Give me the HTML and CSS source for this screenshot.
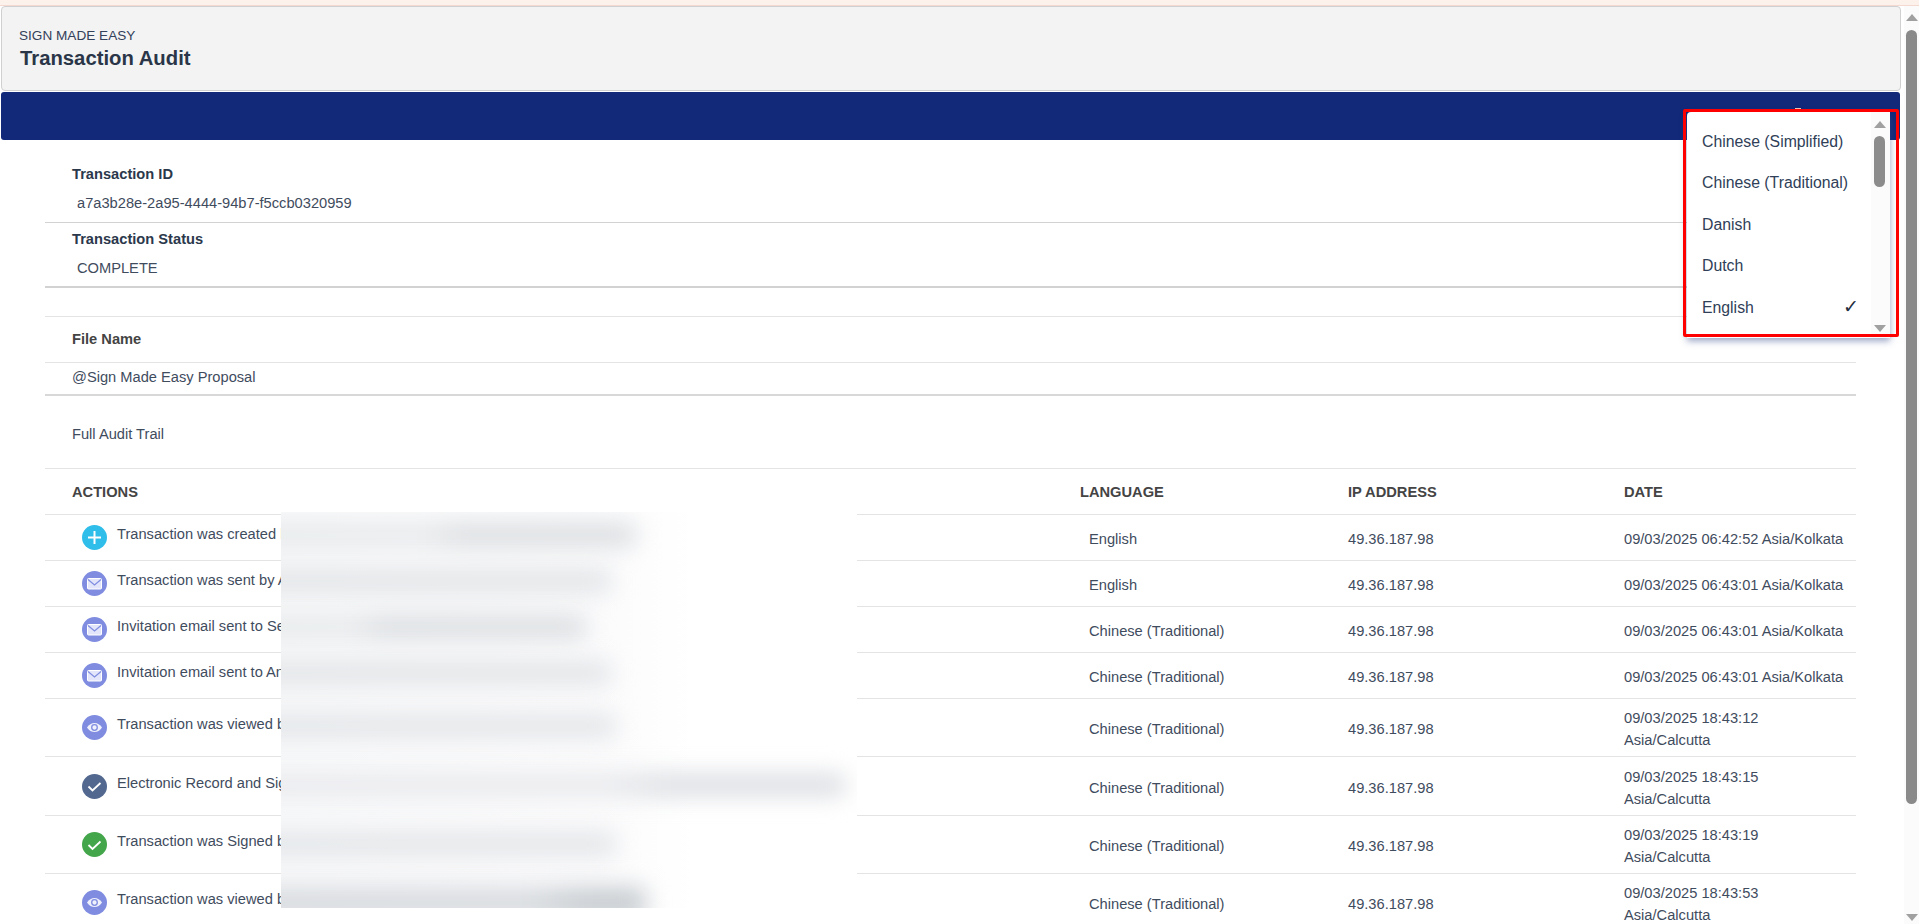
FILE: index.html
```html
<!DOCTYPE html>
<html lang="en">
<head>
<meta charset="utf-8">
<title>Transaction Audit</title>
<link rel="stylesheet" href="styles.css">
</head>
<body>
<svg class="defs" width="0" height="0" aria-hidden="true">
  <symbol id="i-plus" viewBox="0 0 25 25"><circle cx="12.5" cy="12.5" r="12.5" fill="#2fbdea"/><path d="M12.5 6v13M6 12.5h13" stroke="#fff" stroke-width="2" fill="none"/></symbol>
  <symbol id="i-mail" viewBox="0 0 25 25"><circle cx="12.5" cy="12.5" r="12.5" fill="#7f8ce0"/><rect x="5.5" y="7.5" width="14" height="10.5" rx="1" fill="#e3e6fa" stroke="#fff" stroke-width="1"/><path d="M6 8.5l6.5 5.5L19 8.5" stroke="#7f8ce0" stroke-width="1.2" fill="none"/></symbol>
  <symbol id="i-eye" viewBox="0 0 25 25"><circle cx="12.5" cy="12.5" r="12.5" fill="#7f8ce0"/><path d="M5 12.5C7 9.5 9.5 8 12.5 8s5.5 1.500 7.500 4.500C18 15.500 15.500 17 12.500 17S7 15.500 5 12.500z" fill="#eef0fc"/><circle cx="12.500" cy="12.500" r="2.800" fill="#eef0fc" stroke="#7f8ce0" stroke-width="1.300"/></symbol>
  <symbol id="i-record" viewBox="0 0 25 25"><circle cx="12.5" cy="12.5" r="12.5" fill="#52688f"/><path d="M6.500 12.500l4 4 8-7.500" stroke="#fff" stroke-width="1.800" fill="none"/></symbol>
  <symbol id="i-signed" viewBox="0 0 25 25"><circle cx="12.5" cy="12.5" r="12.5" fill="#43a64a"/><path d="M6.500 13l4 4 8-7.500" stroke="#fff" stroke-width="1.800" fill="none"/></symbol>
</svg>
<div class="strip"></div>
<div class="shell">
  <main class="page">
    <header class="head">
      <div class="eyebrow">SIGN MADE EASY</div>
      <h1 class="title">Transaction Audit</h1>
    </header>
    <div class="bluebar"></div>
    <section class="details">
      <div class="block block-id">
        <div class="label">Transaction ID</div>
        <div class="value">a7a3b28e-2a95-4444-94b7-f5ccb0320959</div>
      </div>
      <div class="block block-status">
        <div class="label">Transaction Status</div>
        <div class="value">COMPLETE</div>
      </div>
      <div class="spacer"></div>
      <div class="file-head">File Name</div>
      <div class="file-value">@Sign Made Easy Proposal</div>
      <div class="trail">Full Audit Trail</div>
      <div class="audit">
        <div class="row row-head">
          <div class="th th-actions">ACTIONS</div>
          <div class="th">LANGUAGE</div>
          <div class="th">IP ADDRESS</div>
          <div class="th">DATE</div>
        </div>
        <div class="row"><div class="action"><svg class="icon"><use href="#i-plus"/></svg><span class="action-text">Transaction was created by</span></div><div class="lang">English</div><div class="ip">49.36.187.98</div><div class="date">09/03/2025 06:42:52 Asia/Kolkata</div></div>
        <div class="row"><div class="action"><svg class="icon"><use href="#i-mail"/></svg><span class="action-text">Transaction was sent by A</span></div><div class="lang">English</div><div class="ip">49.36.187.98</div><div class="date">09/03/2025 06:43:01 Asia/Kolkata</div></div>
        <div class="row"><div class="action"><svg class="icon"><use href="#i-mail"/></svg><span class="action-text">Invitation email sent to Se</span></div><div class="lang">Chinese (Traditional)</div><div class="ip">49.36.187.98</div><div class="date">09/03/2025 06:43:01 Asia/Kolkata</div></div>
        <div class="row"><div class="action"><svg class="icon"><use href="#i-mail"/></svg><span class="action-text">Invitation email sent to An</span></div><div class="lang">Chinese (Traditional)</div><div class="ip">49.36.187.98</div><div class="date">09/03/2025 06:43:01 Asia/Kolkata</div></div>
        <div class="row row-tall"><div class="action"><svg class="icon"><use href="#i-eye"/></svg><span class="action-text">Transaction was viewed by</span></div><div class="lang">Chinese (Traditional)</div><div class="ip">49.36.187.98</div><div class="date">09/03/2025 18:43:12 Asia/Calcutta</div></div>
        <div class="row row-tall"><div class="action"><svg class="icon"><use href="#i-record"/></svg><span class="action-text">Electronic Record and Signature</span></div><div class="lang">Chinese (Traditional)</div><div class="ip">49.36.187.98</div><div class="date">09/03/2025 18:43:15 Asia/Calcutta</div></div>
        <div class="row row-tall"><div class="action"><svg class="icon"><use href="#i-signed"/></svg><span class="action-text">Transaction was Signed by</span></div><div class="lang">Chinese (Traditional)</div><div class="ip">49.36.187.98</div><div class="date">09/03/2025 18:43:19 Asia/Calcutta</div></div>
        <div class="row row-tall"><div class="action"><svg class="icon"><use href="#i-eye"/></svg><span class="action-text">Transaction was viewed by</span></div><div class="lang">Chinese (Traditional)</div><div class="ip">49.36.187.98</div><div class="date">09/03/2025 18:43:53 Asia/Calcutta</div></div>
      </div>
    </section>
    <div class="redaction" aria-hidden="true">
      <div class="slot slot-a"><div class="smear smear-1"></div></div>
      <div class="slot slot-a"><div class="smear smear-2"></div></div>
      <div class="slot slot-a"><div class="smear smear-3"></div></div>
      <div class="slot slot-a"><div class="smear smear-2"></div></div>
      <div class="slot slot-b"><div class="smear smear-5"></div></div>
      <div class="slot slot-b"><div class="smear smear-6"></div></div>
      <div class="slot slot-b"><div class="smear smear-5"></div></div>
      <div class="slot slot-b"><div class="smear smear-8"></div></div>
    </div>
    <div class="peek"></div>
    <div class="menu">
      <ul class="menu-list">
        <li class="menu-item">Chinese (Simplified)</li>
        <li class="menu-item">Chinese (Traditional)</li>
        <li class="menu-item">Danish</li>
        <li class="menu-item">Dutch</li>
        <li class="menu-item">English<span class="tick">✓</span></li>
      </ul>
      <div class="menu-scroll">
        <span class="arrow arrow-up"></span>
        <span class="menu-thumb"></span>
        <span class="arrow arrow-down"></span>
      </div>
    </div>
    <div class="annotation"></div>
  </main>
  <div class="scrollbar">
    <span class="arrow arrow-up"></span>
    <span class="thumb"></span>
    <span class="arrow arrow-down"></span>
  </div>
</div>
</body>
</html>
```
FILE: styles.css
```css
* { box-sizing: border-box; }
html, body { margin: 0; height: 100%; overflow: hidden; }
body {
  font-family: "Liberation Sans", Arial, sans-serif;
  font-size: 14.667px;
  color: #3f4c5e;
  background: #fff;
}
.defs { position: absolute; }
.strip { height: 6px; background: #fdf1ec; border-bottom: 1px solid #f3d9cf; }
.shell { display: flex; height: 918px; }
.page { position: relative; flex: 1; min-width: 0; overflow: hidden; }

.head {
  height: 85px;
  margin: 0 3px 0 1px;
  padding: 20px 0 0 17px;
  background: #f3f3f3;
  border: 1px solid #d0d0d0;
  border-radius: 4px;
}
.eyebrow { font-size: 13.6px; line-height: 17px; color: #33415a; }
.title { margin: 2px 0 0 1px; font-size: 20.3px; line-height: 24px; font-weight: 700; color: #2a3648; }
.bluebar { height: 48px; margin: 1px 4px 0 1px; background: #122878; border-radius: 3px; }

.details { padding: 0 48px 0 45px; }
.label { padding-left: 27px; font-weight: 700; line-height: 20px; color: #2b384c; }
.value { padding: 9px 0 0 32px; line-height: 20px; }
.block-id { height: 83px; padding-top: 24px; border-bottom: 1px solid #d2d2d2; }
.block-status { height: 65px; padding-top: 6px; border-bottom: 2px solid #d2d2d2; }
.spacer { height: 29px; border-bottom: 1px solid #e4e4e4; }
.file-head { height: 46px; padding: 12px 0 0 27px; line-height: 20px; font-weight: 700; color: #444; border-bottom: 1px solid #e4e4e4; }
.file-value { height: 33px; padding: 4px 0 0 27px; line-height: 20px; border-bottom: 2px solid #d8d8d8; }
.trail { height: 73px; padding: 28px 0 0 27px; line-height: 20px; border-bottom: 1px solid #e4e4e4; }

.row {
  display: grid;
  grid-template-columns: 1026px 268px 276px 1fr;
  align-items: center;
  height: 46px;
  border-bottom: 1px solid #e4e4e4;
}
.row-tall { height: 58.4px; }
.th { padding-left: 9px; font-weight: 700; color: #444; }
.th-actions { padding-left: 27px; }
.action { display: flex; align-items: center; gap: 10px; padding-left: 37px; }
.icon { width: 25px; height: 25px; flex: none; }
.action-text { padding-bottom: 7px; white-space: nowrap; }
.lang { padding: 3px 0 0 18px; }
.ip { padding: 3px 0 0 9px; }
.date { padding: 3px 10px 0 9px; line-height: 22px; }

.redaction {
  position: absolute;
  left: 281px;
  top: 506px;
  width: 576px;
  height: 396px;
  overflow: hidden;
  background: linear-gradient(90deg, #f8f9fa 0, #fbfbfc 55%, #fff 72%);
}
.slot { display: flex; align-items: center; }
.slot-a { height: 46px; }
.slot-b { height: 59px; }
.smear { height: 24px; margin-left: -30px; filter: blur(11px); border-radius: 8px; }
.smear-1 { width: 385px; background: linear-gradient(90deg, #e8eaec 0 45%, #dcdfe2 55% 100%); }
.smear-2 { width: 360px; background: #e3e5e8; }
.smear-3 { width: 335px; background: linear-gradient(90deg, #e8eaec 0 30%, #dcdfe2 40% 100%); }
.smear-5 { width: 365px; background: #e4e6e9; }
.smear-6 { width: 595px; background: linear-gradient(90deg, #eaebee 0 60%, #dee0e4 70% 100%); }
.smear-8 { width: 395px; height: 32px; background: linear-gradient(90deg, #d9dce0 0 70%, #c9ced2 85% 100%); }

.peek { position: absolute; left: 1795px; top: 102px; width: 6px; height: 1px; background: #f0c8b8; }
.menu {
  position: absolute;
  left: 1687px;
  top: 106px;
  width: 203px;
  height: 226px;
  display: flex;
  background: #fff;
  border-radius: 4px 4px 0 0;
  box-shadow: 0 3px 7px rgba(70, 90, 150, .55);
}
.menu-list { flex: 1; margin: 0; padding: 8.500px 0 0 15px; list-style: none; }
.menu-item {
  position: relative;
  height: 41.600px;
  line-height: 41.600px;
  font-size: 15.800px;
  color: #2f4058;
}
.tick { position: absolute; right: 12px; top: -1px; font-family: "DejaVu Sans", sans-serif; font-size: 19px; color: #1f2d40; }
.menu-scroll {
  width: 19px;
  display: flex;
  flex-direction: column;
  align-items: center;
  padding: 9px 2px 6px 0;
  background: #fbfbfb;
}
.menu-thumb { width: 11px; height: 51px; margin-top: 8px; border-radius: 6px; background: #8c8c8c; }
.menu-scroll .arrow-down { margin-top: auto; }
.annotation {
  position: absolute;
  left: 1683px;
  top: 103px;
  width: 216px;
  height: 228px;
  border: 3px solid #ff0000;
  border-radius: 2px;
  pointer-events: none;
}

.arrow { width: 0; height: 0; border-left: 6.500px solid transparent; border-right: 6.500px solid transparent; flex: none; }
.arrow-up { border-bottom: 7px solid #a0a0a0; }
.arrow-down { border-top: 7px solid #a0a0a0; }

.scrollbar {
  width: 15px;
  display: flex;
  flex-direction: column;
  align-items: center;
  padding: 8px 0 3px;
  background: #fbfbfb;
}
.thumb { width: 11px; height: 774px; margin-top: 9px; border-radius: 6px; background: #8a8a8a; }
.scrollbar .arrow-down { margin-top: auto; }
```
